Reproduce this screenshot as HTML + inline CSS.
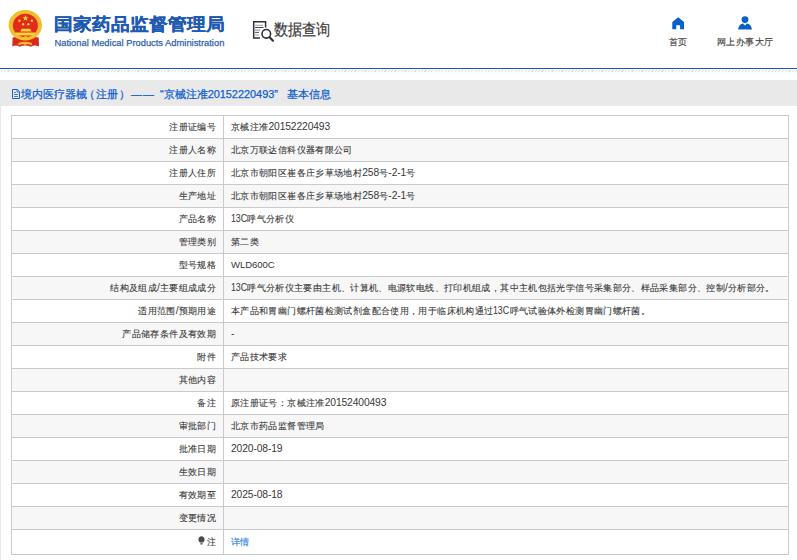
<!DOCTYPE html>
<html><head><meta charset="utf-8">
<style>
*{margin:0;padding:0;box-sizing:border-box}
html,body{width:797px;height:560px;overflow:hidden;background:#fff;font-family:"Liberation Sans",sans-serif;color:#333}
.abs{position:absolute;white-space:nowrap}
#title{left:54px;top:13.9px;font-size:18.7px;font-weight:bold;color:#1f5ab2;line-height:22px;-webkit-text-stroke:0.3px #1f5ab2;transform:scaleY(0.91);transform-origin:0 10.8px}
#en{left:54.5px;top:36.5px;font-size:9.35px;color:#2f62b2;-webkit-text-stroke:0.25px #2f62b2;line-height:12px}
#sj{left:274px;top:19.5px;font-size:14px;color:#3a3a3a;line-height:20px;transform:scaleY(1.12);transform-origin:0 17.2px;-webkit-text-stroke:0.15px #3a3a3a}
.nav{font-size:9.4px;letter-spacing:0.5px;color:#444;-webkit-text-stroke:0.15px #444;line-height:12px;text-align:center;width:80px}
#bline{left:0;top:68px;width:797px;height:1px;background:#0b5ec0}
#hatch{left:0;top:70px;width:797px;height:2px;background:repeating-linear-gradient(135deg,#fff 0,#fff 1.5px,#dcdcdc 1.5px,#dcdcdc 2.36px)}
#crumb{left:0;top:80px;width:797px;height:26px;background:#e9e9e9}
.ct{top:87px;font-size:10.9px;color:#0f5fd0;line-height:14px;-webkit-text-stroke:0.25px #0f5fd0}
#cont{left:0;top:106px;width:797px;height:454px;border-left:1px solid #e8e8e8;background:#fff}
table{table-layout:fixed;position:absolute;left:11px;top:115px;width:778px;border-collapse:collapse;font-size:9.34px;letter-spacing:0.37px;color:#383838;-webkit-text-stroke:0.1px #383838}
td{border:1px solid #ccc9cc;height:23px;padding:0 7px;white-space:nowrap;line-height:12px}
td.l{width:212px;text-align:right}
tr:nth-child(even) td{background:#f7f7f7}
tr.last td{height:25px;padding-bottom:1px}
a{color:#3a8ee6;text-decoration:none;-webkit-text-stroke:0.2px #3a8ee6}
i{font-style:normal;-webkit-text-stroke:0;font-size:10.3px;letter-spacing:-0.13px}
</style></head>
<body>
<svg class="abs" style="left:0;top:0" width="50" height="50" viewBox="0 0 50 50">
  <path d="M12.6 37.5 Q25.3 35 38.7 37.5 L39 46.5 Q34 44.5 31 46.8 Q25.3 44 19.5 46.8 Q16.5 44.5 12.3 46.5 Z" fill="#d9281c"/>
  <ellipse cx="25.3" cy="25.3" rx="16.7" ry="15.2" fill="#f1bf2e"/>
  <ellipse cx="25.4" cy="25.4" rx="12.5" ry="11.7" fill="#e32b1d"/>
  <polygon points="25.5,15.1 26.3,17.2 28.6,17.2 26.8,18.6 27.4,20.8 25.5,19.5 23.6,20.8 24.2,18.6 22.4,17.2 24.7,17.2" fill="#f7d23c"/>
  <circle cx="19.5" cy="20.7" r="1.2" fill="#f7d23c"/>
  <circle cx="23.1" cy="24.3" r="1.2" fill="#f7d23c"/>
  <circle cx="28.3" cy="24.3" r="1.2" fill="#f7d23c"/>
  <circle cx="31.9" cy="20.7" r="1.2" fill="#f7d23c"/>
  <path d="M20.3 31.5 L21.5 28.7 H30.3 L31.5 31.5 Z" fill="#f7d23c"/>
  <rect x="15.8" y="32.5" width="19.3" height="3" fill="#f7d23c"/>
  <ellipse cx="25.8" cy="37.8" rx="2" ry="1.7" fill="#f1bf2e"/>
  <path d="M18.3 43 Q25.1 40.5 31.9 43 L31.9 45.2 Q25.1 43 18.3 45.2 Z" fill="#f1bf2e"/>
  <circle cx="25.1" cy="43.6" r="1.4" fill="#f1bf2e"/>
</svg>
<div id="title" class="abs">国家药品监督管理局</div>
<div id="en" class="abs">National Medical Products Administration</div>
<svg class="abs" style="left:250px;top:18px" width="26" height="26" viewBox="0 0 26 26">
  <path d="M10 19.9 H3.7 V3.8 H15.6 V9.5" fill="none" stroke="#2e3040" stroke-width="1.5"/>
  <path d="M5.1 7.2h7.9M5.1 12.1h5.1M5.1 17h3.8" stroke="#9a9ba2" stroke-width="1.1"/>
  <path d="M5.1 9.5h8.4M5.1 14.4h3.8" stroke="#34364a" stroke-width="0.9"/>
  <circle cx="16.3" cy="15.8" r="4.3" fill="#fff" stroke="#2e3040" stroke-width="1.6"/>
  <path d="M19.6 19.3 L23 22.8" stroke="#2e3040" stroke-width="2.1" stroke-linecap="round"/>
</svg>
<div id="sj" class="abs">数据查询</div>
<svg class="abs" style="left:671.5px;top:16.5px" width="13" height="13" viewBox="0 0 13 13">
  <path d="M6.2 0.3 L12 5 V12.3 H8.1 V8.2 H4.3 V12.3 H0.3 V5 Z" fill="#0560c8"/>
</svg>
<div class="abs nav" style="left:638px;top:36px">首页</div>
<svg class="abs" style="left:738px;top:16px" width="14" height="14" viewBox="0 0 14 14">
  <circle cx="7" cy="3.6" r="3.4" fill="#0560c8"/>
  <path d="M0 13.5 Q1 8 5 7.5 L7 9.5 L9 7.5 Q13 8 14 13.5 Z" fill="#0560c8"/>
</svg>
<div class="abs nav" style="left:705px;top:36px">网上办事大厅</div>
<div id="bline" class="abs"></div>
<div id="hatch" class="abs"></div>
<div id="crumb" class="abs"></div>
<svg class="abs" style="left:12px;top:89px" width="8" height="10" viewBox="0 0 8 10">
  <path d="M0.5 0.5 H5.3 L7.5 2.7 V9.5 H0.5 Z" fill="none" stroke="#1a62d0" stroke-width="1"/>
  <path d="M5 0.5 V3 H7.5" fill="none" stroke="#1a62d0" stroke-width="0.8"/>
  <path d="M2 3.5h1.8M2 5.5h4M2 7.5h4" stroke="#3a6ad0" stroke-width="0.9"/>
</svg>
<div class="abs ct" style="left:21px">境内医疗器械</div>
<div class="abs ct" style="left:83.5px">（</div>
<div class="abs ct" style="left:95.8px">注册</div>
<div class="abs ct" style="left:118.7px">）</div>
<div class="abs ct" style="left:131px;letter-spacing:1px">——</div>
<div class="abs ct" style="left:160px">“京械注准20152220493”</div>
<div class="abs ct" style="left:287px">基本信息</div>
<div id="cont" class="abs"></div>
<table>
<tr><td class="l">注册证编号</td><td>京械注准<i>20152220493</i></td></tr>
<tr><td class="l">注册人名称</td><td>北京万联达信科仪器有限公司</td></tr>
<tr><td class="l">注册人住所</td><td>北京市朝阳区崔各庄乡草场地村<i>258</i>号<i>-2-1</i>号</td></tr>
<tr><td class="l">生产地址</td><td>北京市朝阳区崔各庄乡草场地村<i>258</i>号<i>-2-1</i>号</td></tr>
<tr><td class="l">产品名称</td><td><i style="display:inline-block;transform:scaleX(0.86);transform-origin:0 0;margin-right:-2.3px">13C</i>呼气分析仪</td></tr>
<tr><td class="l">管理类别</td><td>第二类</td></tr>
<tr><td class="l">型号规格</td><td><i style="font-size:9.6px;letter-spacing:-0.1px">WLD600C</i></td></tr>
<tr><td class="l">结构及组成<i>/</i>主要组成成分</td><td><i style="display:inline-block;transform:scaleX(0.86);transform-origin:0 0;margin-right:-2.3px">13C</i>呼气分析仪主要由主机、计算机、电源软电线、打印机组成，其中主机包括光学信号采集部分、样品采集部分、控制<i>/</i>分析部分。</td></tr>
<tr><td class="l">适用范围<i>/</i>预期用途</td><td>本产品和胃幽门螺杆菌检测试剂盒配合使用，用于临床机构通过<i style="display:inline-block;transform:scaleX(0.86);transform-origin:0 0;margin-right:-2.3px">13C</i>呼气试验体外检测胃幽门螺杆菌。</td></tr>
<tr><td class="l">产品储存条件及有效期</td><td><i>-</i></td></tr>
<tr><td class="l">附件</td><td>产品技术要求</td></tr>
<tr><td class="l">其他内容</td><td></td></tr>
<tr><td class="l">备注</td><td>原注册证号：京械注准<i>20152400493</i></td></tr>
<tr><td class="l">审批部门</td><td>北京市药品监督管理局</td></tr>
<tr><td class="l">批准日期</td><td><i>2020-08-19</i></td></tr>
<tr><td class="l">生效日期</td><td></td></tr>
<tr><td class="l">有效期至</td><td><i>2025-08-18</i></td></tr>
<tr><td class="l">变更情况</td><td></td></tr>
<tr class="last"><td class="l"><svg width="7" height="9" viewBox="0 0 7 9" style="vertical-align:-0.5px;margin-right:2px"><path d="M3.5 0.3 C1.6 0.3 0.4 1.7 0.4 3.4 C0.4 4.9 1.4 5.6 1.8 6.6 H5.2 C5.6 5.6 6.6 4.9 6.6 3.4 C6.6 1.7 5.4 0.3 3.5 0.3Z M2.1 7.2 H4.9 L4.4 8.5 H2.6Z" fill="#4a4a4a"/></svg>注</td><td><a>详情</a></td></tr>
</table>
</body></html>
